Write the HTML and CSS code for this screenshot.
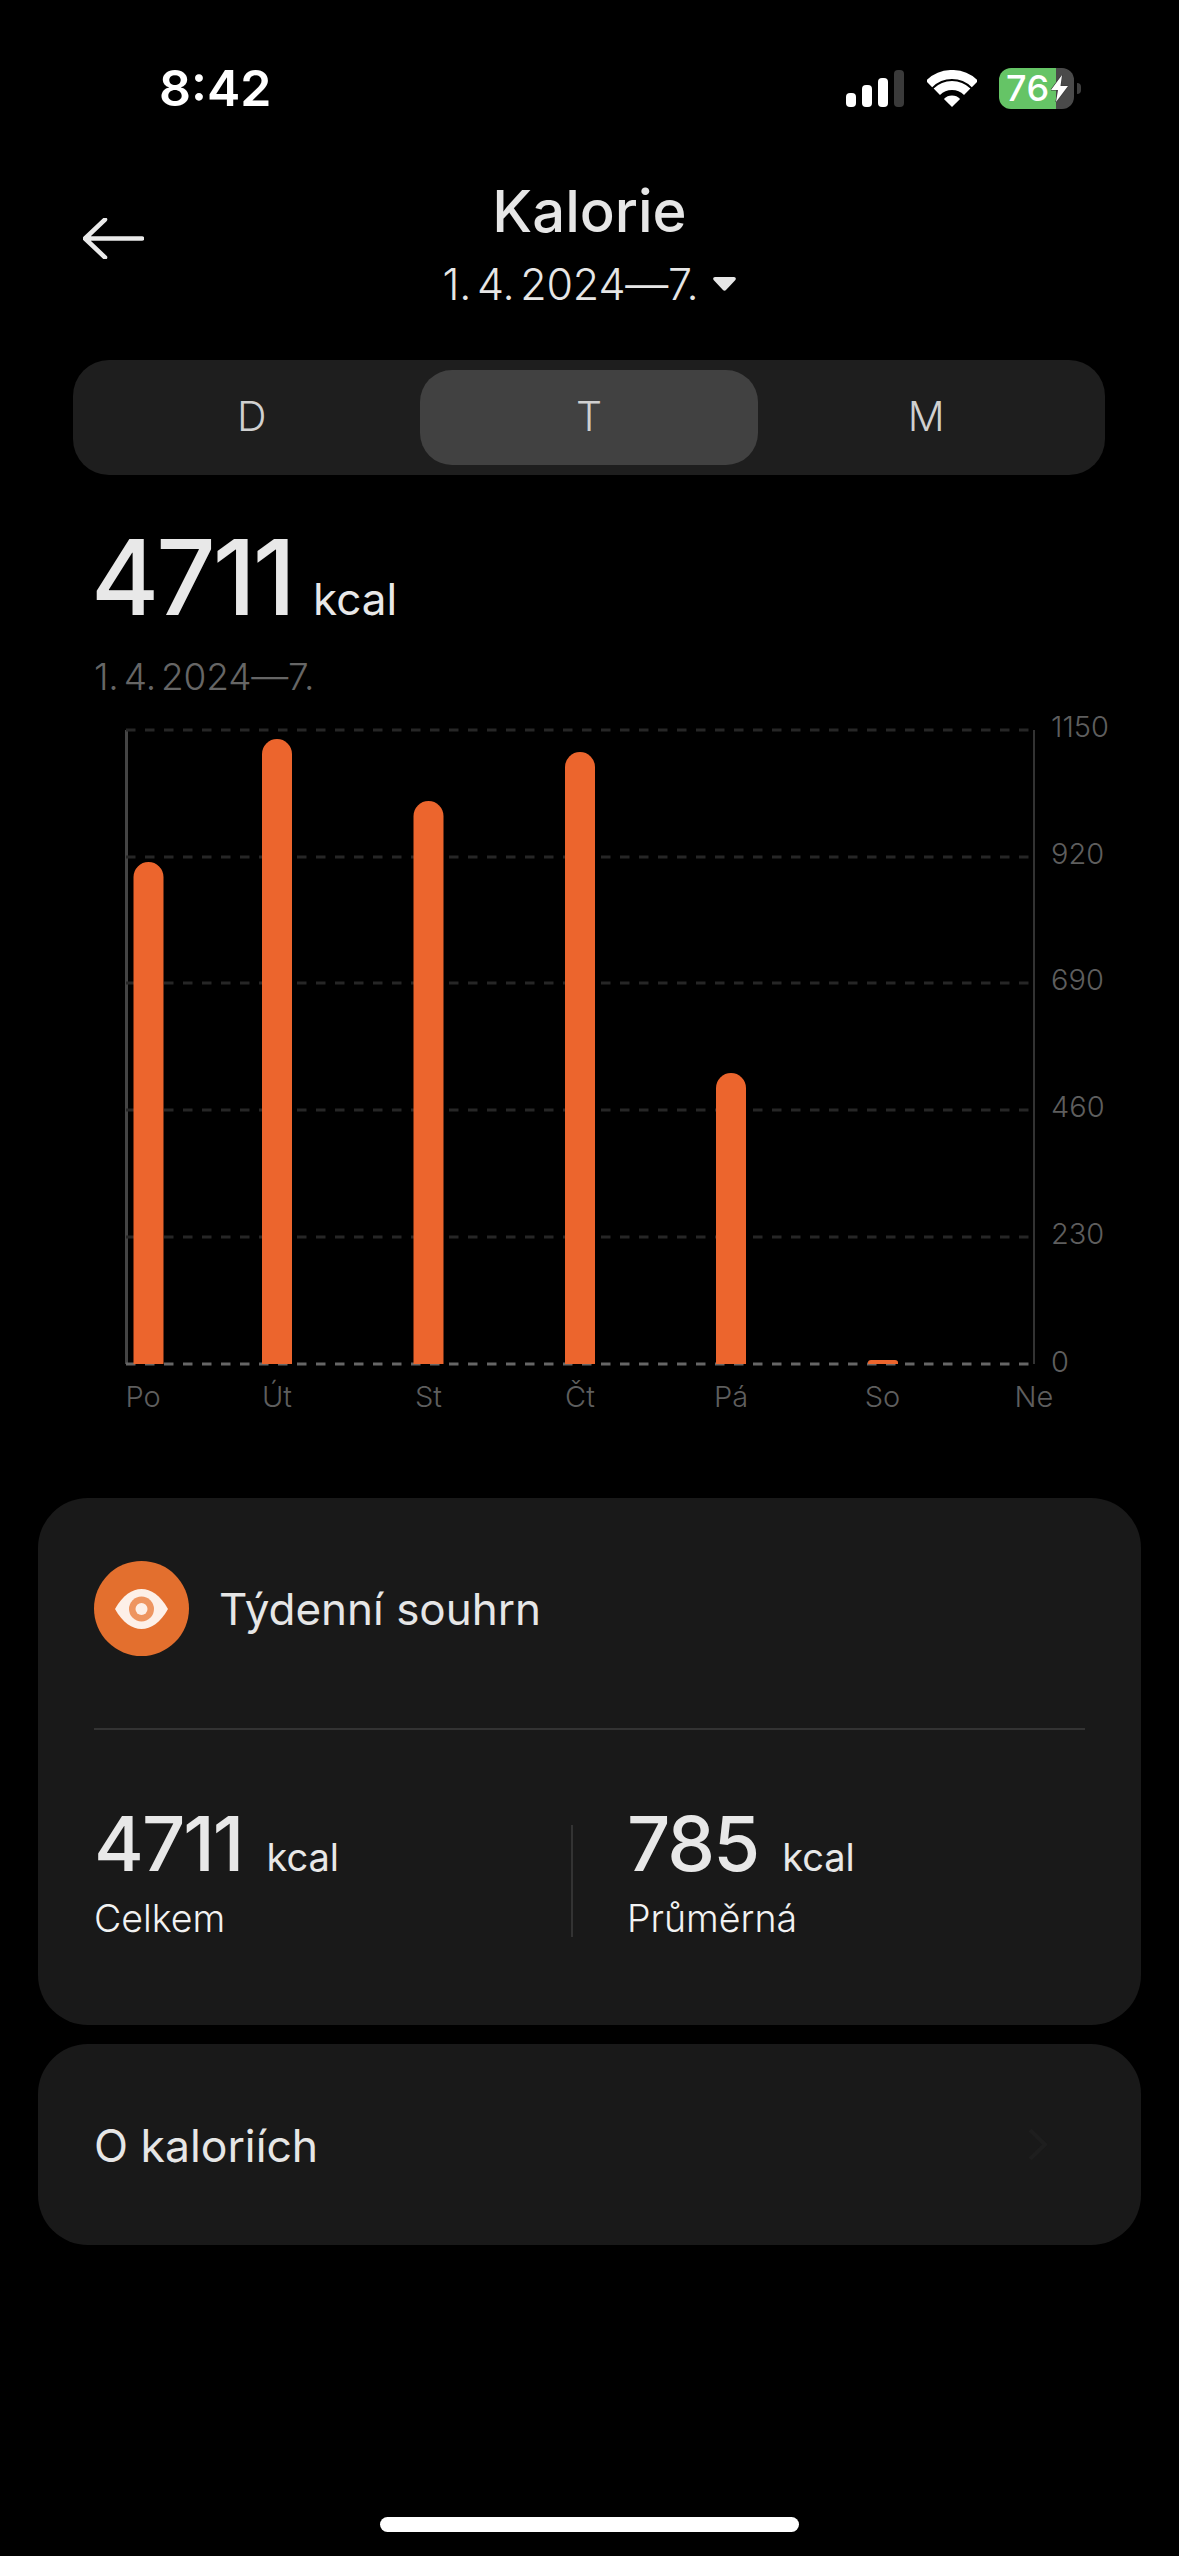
FILE: index.html
```html
<!DOCTYPE html>
<html lang="cs">
<head>
<meta charset="utf-8">
<title>Kalorie</title>
<link rel="stylesheet" href="styles.css">
</head>
<body>
<main class="page">
  <header class="status">
    <span class="time">8:42</span>
    <div class="status-icons">
      <div class="signal">
        <i class="sig s1"></i><i class="sig s2"></i><i class="sig s3"></i><i class="sig s4"></i>
      </div>
      <svg class="wifi" viewBox="0 0 50 37" width="50" height="37">
        <path class="wifi-arc" d="M2 14A32.5 32.5 0 0 1 48 14"/>
        <path class="wifi-arc" d="M9.8 21.8A21.5 21.5 0 0 1 40.2 21.8"/>
        <path class="wifi-dot" d="M25 37L16.9 28.9A11.5 11.5 0 0 1 33.1 28.9Z"/>
      </svg>
      <div class="battery">
        <span class="battery-level">76</span>
        <svg class="bolt" viewBox="0 0 17 27" width="17" height="27"><path d="M11 0L0 15H7L5 27L17 11H9.5Z"/></svg>
      </div>
      <i class="battery-nub"></i>
    </div>
  </header>

  <section class="title-bar">
    <svg class="back" viewBox="0 0 61 41" width="61" height="41">
      <path d="M22 1.5L2 20.5L22 39.5M2 20.5H59"/>
    </svg>
    <div class="title-text">
      <h1 class="title">Kalorie</h1>
      <div class="range">
        <span>1. 4. 2024—7.</span>
        <svg class="caret" viewBox="0 0 23 14" width="23" height="14"><path d="M2 0H21C22.5 0 23.4 1.6 22.4 2.9L13 13C12.2 13.9 10.8 13.9 10 13L.6 2.9C-.4 1.6.5 0 2 0Z"/></svg>
      </div>
    </div>
  </section>

  <nav class="segments">
    <div class="segment">D</div>
    <div class="segment active">T</div>
    <div class="segment">M</div>
  </nav>

  <section class="summary">
    <div class="total"><span class="total-num">4711</span><span class="total-unit">kcal</span></div>
    <div class="total-date">1. 4. 2024—7.</div>
  </section>

  <svg class="chart" viewBox="0 704 1179 726" width="1179" height="726">
    <path class="axis-left" d="M126.5 730V1364"/>
    <path class="axis-right" d="M1034 730V1364"/>
    <path class="grid" d="M126 730H1034M126 857H1034M126 983H1034M126 1110H1034M126 1237H1034"/>
    <path class="grid base" d="M126 1364H1034"/>
    <path class="bar" d="M133.500 877A15 15 0 0 1 163.500 877V1364H133.500Z"/>
    <path class="bar" d="M262 754A15 15 0 0 1 292 754V1364H262Z"/>
    <path class="bar" d="M413.500 816A15 15 0 0 1 443.500 816V1364H413.500Z"/>
    <path class="bar" d="M565 767A15 15 0 0 1 595 767V1364H565Z"/>
    <path class="bar" d="M716 1088A15 15 0 0 1 746 1088V1364H716Z"/>
    <path class="bar" d="M868 1364V1362.500Q868 1360 871 1360H895Q898 1360 898 1362.500V1364Z"/>
    <text class="y-label" x="1051" y="737">1150</text>
    <text class="y-label" x="1051" y="864">920</text>
    <text class="y-label" x="1051" y="990">690</text>
    <text class="y-label" x="1051" y="1117">460</text>
    <text class="y-label" x="1051" y="1244">230</text>
    <text class="y-label" x="1051" y="1371.500">0</text>
    <text class="x-label" x="143" y="1407">Po</text>
    <text class="x-label" x="277" y="1407">Út</text>
    <text class="x-label" x="428.500" y="1407">St</text>
    <text class="x-label" x="580" y="1407">Čt</text>
    <text class="x-label" x="731" y="1407">Pá</text>
    <text class="x-label" x="882.500" y="1407">So</text>
    <text class="x-label" x="1034" y="1407">Ne</text>
  </svg>

  <section class="card weekly">
    <div class="card-head">
      <div class="eye-badge">
        <svg viewBox="0 0 53 40" width="53" height="40">
          <path class="eye-white" d="M0 20C8 6 17 0 26.500 0S45 6 53 20C45 34 36 40 26.500 40S8 34 0 20Z"/>
          <circle class="eye-ring" cx="26.500" cy="20" r="12.500"/>
          <circle class="eye-white" cx="26.500" cy="20" r="6"/>
        </svg>
      </div>
      <h2 class="card-title">Týdenní souhrn</h2>
    </div>
    <div class="divider"></div>
    <div class="stats">
      <div class="stat">
        <div class="stat-value"><span class="stat-num">4711</span><span class="stat-unit">kcal</span></div>
        <div class="stat-label">Celkem</div>
      </div>
      <div class="stat-sep"></div>
      <div class="stat second">
        <div class="stat-value"><span class="stat-num">785</span><span class="stat-unit">kcal</span></div>
        <div class="stat-label">Průměrná</div>
      </div>
    </div>
  </section>

  <section class="card about">
    <span class="card-title">O kaloriích</span>
    <svg class="chevron" viewBox="0 0 19 33" width="19" height="33"><path d="M2 2L17 16.500L2 31"/></svg>
  </section>

  <div class="home-indicator"></div>
</main>
</body>
</html>
```

FILE: styles.css
```css
* { box-sizing: border-box; }
html, body { margin: 0; padding: 0; background: #000; }
body { font-family: Inter, "Noto Sans", sans-serif; color: #e6e6e6; }
h1, h2 { margin: 0; font-weight: 400; }

.page {
  width: 1179px;
  height: 2556px;
  background: #000;
  display: flex;
  flex-direction: column;
  overflow: hidden;
}

/* status bar */
.status {
  height: 176px;
  padding: 57px 98px 0 159px;
  display: flex;
  justify-content: space-between;
  align-items: flex-start;
}
.time {
  font-size: 50px;
  line-height: 62px;
  font-weight: 600;
  color: #fff;
}
.status-icons { display: flex; align-items: center; height: 62px; }
.signal { display: flex; align-items: flex-end; gap: 6px; height: 37px; }
.sig { display: block; width: 10px; border-radius: 4px; background: #fff; }
.s1 { height: 14px; }
.s2 { height: 22px; }
.s3 { height: 29px; }
.s4 { height: 37px; background: #3a3a3a; }
.wifi { margin-left: 23px; display: block; }
.wifi-arc { fill: none; stroke: #fff; stroke-width: 9; }
.wifi-dot { fill: #fff; }
.battery {
  margin-left: 22px;
  width: 75px;
  height: 41px;
  border-radius: 12px;
  background: linear-gradient(90deg, #65c466 76%, #4a4a4a 76%);
  display: flex;
  align-items: center;
  padding-left: 7px;
  gap: 1px;
}
.battery-level { font-size: 36px; line-height: 41px; font-weight: 500; color: #fff; width: 44px; letter-spacing: .5px; }
.bolt { display: block; }
.bolt path { fill: #fff; stroke: #3a3a3a; stroke-width: 1.2; paint-order: stroke; }
.battery-nub {
  display: block;
  margin-left: 3px;
  width: 4px;
  height: 11px;
  border-radius: 0 4px 4px 0;
  background: #3f3f3f;
}

/* title */
.title-bar {
  height: 138px;
  display: grid;
  grid-template-columns: 1fr auto 1fr;
}
.back { margin: 42px 0 0 83px; display: block; }
.back path { fill: none; stroke: #eaeaea; stroke-width: 4.5; stroke-linecap: round; stroke-linejoin: round; }
.title-text { grid-column: 2; display: flex; flex-direction: column; align-items: center; }
.title { font-size: 58px; line-height: 70px; font-weight: 500; color: #e6e6e6; }
.range {
  margin-top: 8px;
  display: flex;
  align-items: center;
  gap: 15px;
  font-size: 43px;
  line-height: 60px;
  font-weight: 300;
  color: #e6e6e6;
  word-spacing: -6px;
  letter-spacing: -.2px;
}
.caret { display: block; fill: #e6e6e6; }

/* segmented control */
.segments {
  margin: 46px 74px 0 73px;
  height: 115px;
  padding: 10px;
  border-radius: 36px;
  background: #1e1e1e;
  display: grid;
  grid-template-columns: repeat(3, 1fr);
}
.segment {
  display: flex;
  align-items: center;
  justify-content: center;
  padding-bottom: 3px;
  font-size: 41px;
  font-weight: 300;
  color: #d0d0d0;
  border-radius: 32px;
}
.segment.active { background: #414141; }

/* summary */
.summary { margin-top: 47px; padding-left: 91px; }
.total { display: flex; align-items: baseline; gap: 20px; height: 110px; line-height: 110px; }
.total-num { font-size: 104px; font-weight: 500; color: #e8e8e8; letter-spacing: -3px; }
.total-unit { font-size: 44px; font-weight: 400; color: #e8e8e8; }
.total-date {
  margin-top: 20px;
  padding-left: 3px;
  font-size: 37px;
  line-height: 50px;
  font-weight: 300;
  color: #666;
  word-spacing: -5px;
  letter-spacing: -.2px;
}

/* chart */
.chart { display: block; margin-top: 2px; flex: none; }
.axis-left { stroke: #444; stroke-width: 3; fill: none; }
.axis-right { stroke: #333; stroke-width: 2; fill: none; }
.grid { stroke: #262626; stroke-width: 3; stroke-dasharray: 9.500 9.500; fill: none; }
.grid.base { stroke: #666; }
.bar { fill: #ec652d; }
.y-label, .x-label { font-family: Inter, "Noto Sans", sans-serif; font-size: 29px; font-weight: 300; fill: #5e5e5e; }
.x-label { text-anchor: middle; }

/* cards */
.card { margin: 0 38px; background: #191919; border-radius: 50px; flex: none; }
.weekly { margin-top: 68px; height: 527px; padding: 63px 56px 0 56px; }
.card-head { display: flex; align-items: center; gap: 30px; }
.eye-badge {
  width: 95px;
  height: 95px;
  border-radius: 50%;
  background: #e36f2e;
  display: flex;
  align-items: center;
  justify-content: center;
}
.eye-badge svg { display: block; }
.eye-white { fill: #fdf0e8; }
.eye-ring { fill: #ee9560; }
.card-title { font-size: 44px; line-height: 60px; font-weight: 400; color: #e6e6e6; }
.about .card-title { font-size: 44.500px; }
.divider { margin-top: 72px; height: 2px; background: #333; }
.stats { margin-top: 73px; display: flex; align-items: flex-start; }
.stat { width: 477px; }
.stat.second { padding-left: 54px; width: auto; }
.stat-sep { width: 2px; height: 112px; margin-top: 22px; background: #333; }
.stat-value { display: flex; align-items: baseline; gap: 24px; height: 80px; line-height: 80px; }
.stat-num { font-size: 76px; font-weight: 500; color: #e8e8e8; letter-spacing: -2px; }
.stat-unit { font-size: 38px; font-weight: 400; color: #e8e8e8; }
.stat-label { margin-top: 14px; font-size: 37.500px; line-height: 44px; font-weight: 300; color: #f2f2f2; }
.about {
  margin-top: 19px;
  height: 201px;
  padding: 3px 94px 0 56px;
  display: flex;
  align-items: center;
  justify-content: space-between;
}
.chevron { display: block; margin-top: -3px; }
.chevron path { fill: none; stroke: #1e1e1e; stroke-width: 4; }

/* home indicator */
.home-indicator {
  margin: auto auto 24px;
  width: 419px;
  height: 15px;
  border-radius: 8px;
  background: #fff;
  flex: none;
}
```
